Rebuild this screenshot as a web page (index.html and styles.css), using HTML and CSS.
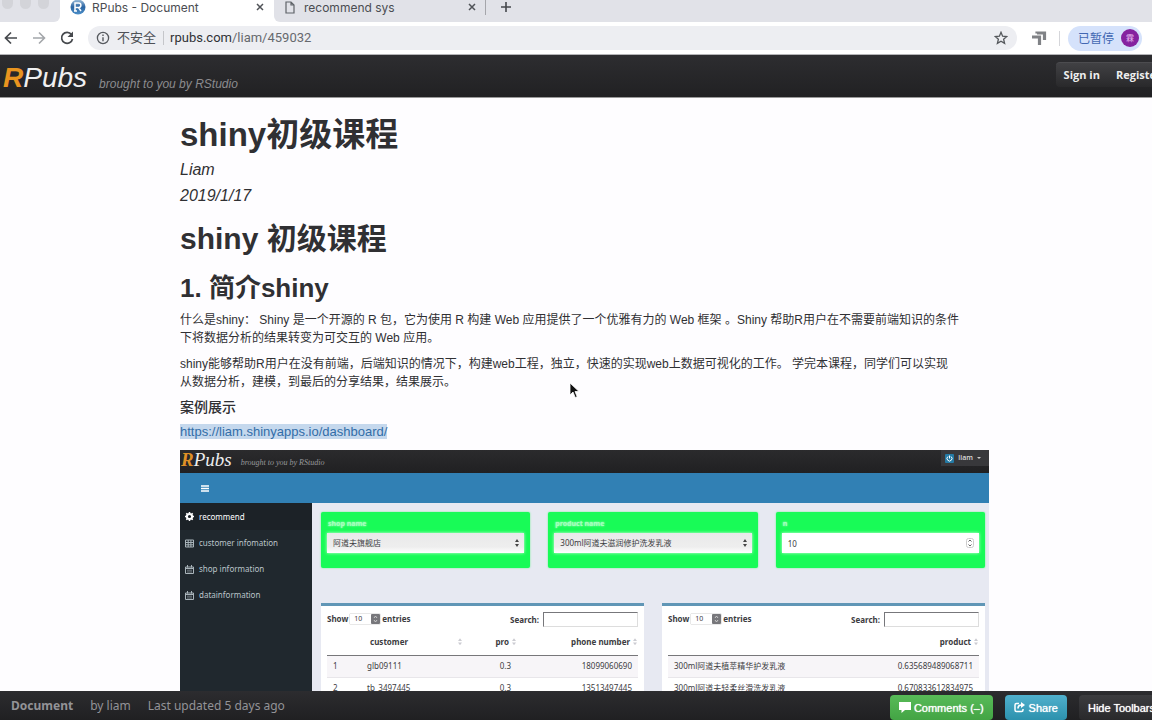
FILE: index.html
```html
<!DOCTYPE html>
<html lang="zh-CN">
<head>
<meta charset="utf-8">
<title>RPubs - Document</title>
<link rel="stylesheet" href="styles.css">
</head>
<body>
<div class="window">
  <div class="tabs">
    <div class="lights"><i></i><i></i><i></i></div>
    <div class="tab active">
      <svg class="favicon" width="16" height="16" viewBox="0 0 16 16"><defs><linearGradient id="ball" x2="0" y2="1"><stop stop-color="#9fc0dc"/><stop offset=".5" stop-color="#2b64a2"/><stop offset="1" stop-color="#4e91ca"/></linearGradient></defs><circle cx="8" cy="8" r="7.5" fill="url(#ball)"/><path d="M5 12V4h3.700a2.200 2.200 0 0 1 0 4.400H5.500M8.500 8.500L11 12M4 12h3" fill="none" stroke="#fff" stroke-width="1.500"/></svg>
      <span class="tab-title">RPubs - Document</span>
      <button class="close" aria-label="Close tab"><svg width="8" height="8" viewBox="0 0 8 8"><path d="M1 1l6 6M7 1L1 7" stroke="#505358" stroke-width="1.500"/></svg></button>
    </div>
    <div class="tab">
      <svg class="page-icon" width="10" height="13" viewBox="0 0 10 13"><path d="M1 1h5l3 3v8H1zM6 1v3h3" fill="none" stroke="#5f6368" stroke-width="1.200"/></svg>
      <span class="tab-title">recommend sys</span>
      <button class="close" aria-label="Close tab"><svg width="8" height="8" viewBox="0 0 8 8"><path d="M1 1l6 6M7 1L1 7" stroke="#505358" stroke-width="1.500"/></svg></button>
    </div>
    <button class="new-tab" aria-label="New tab"><svg width="12" height="12" viewBox="0 0 12 12"><path d="M6 1v10M1 6h10" stroke="#45484c" stroke-width="1.600"/></svg></button>
  </div>
  <div class="toolbar">
    <button aria-label="Back"><svg width="14" height="14" viewBox="0 0 14 14"><path d="M13 7H2M7 1.500L1.500 7 7 12.500" fill="none" stroke="#46494d" stroke-width="1.700"/></svg></button>
    <button aria-label="Forward"><svg width="14" height="14" viewBox="0 0 14 14"><path d="M1 7h11M7 1.500L12.500 7 7 12.500" fill="none" stroke="#a3a6aa" stroke-width="1.600"/></svg></button>
    <button aria-label="Reload"><svg width="14" height="14" viewBox="0 0 14 14"><path d="M11.500 3.500A5.500 5.500 0 1 0 12.500 8" fill="none" stroke="#46494d" stroke-width="1.700"/><path d="M13 0.500v5.500H7.500z" fill="#46494d"/></svg></button>
    <div class="address">
      <svg width="14" height="14" viewBox="0 0 14 14"><circle cx="7" cy="7" r="5.600" fill="none" stroke="#56595e" stroke-width="1.300"/><path d="M7 6.200v4M7 3.500v1.400" stroke="#56595e" stroke-width="1.400"/></svg>
      <span class="insecure">不安全</span>
      <span class="url">rpubs.com<span class="path">/liam/459032</span></span>
      <svg class="star" width="14" height="14" viewBox="0 0 14 14"><path d="M7 1.300l1.600 3.900 4.200.3-3.200 2.700 1 4.200L7 10.200l-3.600 2.200 1-4.200L1.200 5.500l4.200-.3z" fill="none" stroke="#55585c" stroke-width="1.300"/></svg>
    </div>
    <svg class="extension" width="16" height="16" viewBox="0 0 16 16"><path d="M1 7h7.500v8M6 3.500V3h7.500v7" fill="none" stroke="#808286" stroke-width="3.200"/></svg>
    <span class="divider"></span>
    <button class="profile">已暂停<span class="avatar">霖</span></button>
  </div>

  <header class="navbar">
    <a class="brand" href="#"><b>R</b>Pubs</a>
    <span class="tagline">brought to you by RStudio</span>
    <nav class="account"><a href="#">Sign in</a><a href="#">Register</a></nav>
  </header>

  <main class="document">
    <h1 class="title">shiny初级课程</h1>
    <p class="meta">Liam</p>
    <p class="meta">2019/1/17</p>
    <h1 class="course">shiny 初级课程</h1>
    <h2>1. 简介shiny</h2>
    <p class="body">什么是shiny： Shiny 是一个开源的 R 包，它为使用 R 构建 Web 应用提供了一个优雅有力的 Web 框架 。Shiny 帮助R用户在不需要前端知识的条件<br>下将数据分析的结果转变为可交互的 Web 应用。</p>
    <p class="body">shiny能够帮助R用户在没有前端，后端知识的情况下，构建web工程，独立，快速的实现web上数据可视化的工作。 学完本课程，同学们可以实现<br>从数据分析，建模，到最后的分享结果，结果展示。</p>
    <h4>案例展示</h4>
    <p class="demo-link"><a href="#">https://liam.shinyapps.io/dashboard/</a></p>

    <section class="dashboard">
      <div class="dash-nav">
        <a class="dash-brand" href="#"><b>R</b>Pubs</a>
        <span class="dash-tagline">brought to you by RStudio</span>
        <button class="dash-user"><svg width="9" height="9" viewBox="0 0 9 9"><rect width="9" height="9" rx="1" fill="#247aa5"/><path d="M3 2.500a2.500 2.500 0 1 0 3 0M4.500 1.500v3" fill="none" stroke="#fff"/></svg>liam<i class="caret"></i></button>
      </div>
      <div class="dash-bar"><button aria-label="Menu"><svg width="8" height="7" viewBox="0 0 8 7"><path d="M0 1h8M0 3.500h8M0 6h8" stroke="#fff" stroke-width="1.500"/></svg></button></div>
      <div class="dash-main">
        <nav class="sidebar">
          <a class="current" href="#"><svg width="9" height="9" viewBox="0 0 9 9"><circle cx="4.500" cy="4.500" r="2.600" fill="none" stroke="#fff" stroke-width="2"/><path d="M4.500 0v1.500M4.500 7.500V9M0 4.500h1.500M7.500 4.500H9M1.300 1.300l1 1M6.700 6.700l1 1M7.700 1.300l-1 1M2.300 6.700l-1 1" stroke="#fff" stroke-width="1.500"/></svg>recommend</a>
          <a href="#"><svg width="9" height="9" viewBox="0 0 9 9"><path d="M.5 1h8v7h-8zM.5 3.500h8M.5 5.800h8M3.200 1v7M5.900 1v7" fill="none" stroke="#a9b4ba"/></svg>customer infomation</a>
          <a href="#"><svg width="9" height="9" viewBox="0 0 9 9"><path d="M.5 2h8v6.500h-8zM.5 3.500h8M2.500 0v2.500M6.500 0v2.500" fill="none" stroke="#a9b4ba"/><path d="M2 5.200h5M2 7h5" stroke="#a9b4ba" stroke-width=".6"/></svg>shop information</a>
          <a href="#"><svg width="9" height="9" viewBox="0 0 9 9"><path d="M.5 2h8v6.500h-8zM.5 3.500h8M2.500 0v2.500M6.500 0v2.500" fill="none" stroke="#a9b4ba"/><path d="M2 5.200h5M2 7h5" stroke="#a9b4ba" stroke-width=".6"/></svg>datainformation</a>
        </nav>
        <div class="content">
          <div class="filters">
            <div class="filter">
              <label for="shop">shop name</label>
              <div class="field"><select id="shop"><option>阿道夫旗舰店</option></select><svg class="arrows" width="4" height="8" viewBox="0 0 4 8"><path d="M0 3l2-3 2 3zM0 5l2 3 2-3z" fill="#444"/></svg></div>
            </div>
            <div class="filter">
              <label for="product">product name</label>
              <div class="field"><select id="product"><option>300ml阿道夫滋润修护洗发乳液</option></select><svg class="arrows" width="4" height="8" viewBox="0 0 4 8"><path d="M0 3l2-3 2 3zM0 5l2 3 2-3z" fill="#444"/></svg></div>
            </div>
            <div class="filter">
              <label for="count">n</label>
              <div class="field"><input id="count" type="text" value="10"><svg class="arrows" width="8" height="10" viewBox="0 0 8 10"><rect x=".5" y=".5" width="7" height="9" rx="2" fill="#fff" stroke="#ccc"/><path d="M2.500 3.500L4 2l1.500 1.500M2.500 6.500L4 8l1.500-1.500" fill="none" stroke="#666"/></svg></div>
            </div>
          </div>
          <div class="results">
            <div class="panel">
              <div class="controls">
                <label>Show <span class="length"><select><option>10</option></select><svg width="9" height="10" viewBox="0 0 9 10"><rect width="9" height="10" rx="1" fill="#77777b"/><path d="M3 4l1.500-2L6 4M3 6l1.500 2L6 6" fill="none" stroke="#ddd" stroke-width=".8"/></svg></span> entries</label>
                <label>Search: <input class="search" type="search"></label>
              </div>
              <table class="customers">
                <thead><tr><th></th><th class="name">customer<i class="sort"></i></th><th>pro<i class="sort"></i></th><th>phone number<i class="sort"></i></th></tr></thead>
                <tbody>
                  <tr><td>1</td><td>glb09111</td><td>0.3</td><td>18099060690</td></tr>
                  <tr><td>2</td><td>tb_3497445</td><td>0.3</td><td>13513497445</td></tr>
                </tbody>
              </table>
            </div>
            <div class="panel">
              <div class="controls">
                <label>Show <span class="length"><select><option>10</option></select><svg width="9" height="10" viewBox="0 0 9 10"><rect width="9" height="10" rx="1" fill="#77777b"/><path d="M3 4l1.500-2L6 4M3 6l1.500 2L6 6" fill="none" stroke="#ddd" stroke-width=".8"/></svg></span> entries</label>
                <label>Search: <input class="search" type="search"></label>
              </div>
              <table class="products">
                <thead><tr><th></th><th>product<i class="sort"></i></th></tr></thead>
                <tbody>
                  <tr><td>300ml阿道夫植萃精华护发乳液</td><td>0.635689489068711</td></tr>
                  <tr><td>300ml阿道夫轻柔丝滑洗发乳液</td><td>0.670833612834975</td></tr>
                </tbody>
              </table>
            </div>
          </div>
        </div>
      </div>
    </section>
  </main>

  <footer class="footer">
    <b>Document</b><span>by liam</span><span>Last updated 5 days ago</span>
    <div class="actions">
      <button class="comments"><svg width="12" height="11" viewBox="0 0 12 11"><path d="M0 0h12v8H6l-3.500 3V8H0z" fill="#fff"/></svg>Comments (–)</button>
      <button class="share"><svg width="11" height="11" viewBox="0 0 11 11"><path d="M5 1.500H2.500Q1 1.500 1 3v5q0 1.500 1.500 1.500h5Q9 9.500 9 8V7" fill="none" stroke="#fff" stroke-width="1.500"/><path d="M4 6.500Q4 3 7.500 3" fill="none" stroke="#fff" stroke-width="1.700"/><path d="M7 0l4 3-4 3z" fill="#fff"/></svg>Share</button>
      <button class="hide">Hide Toolbars</button>
    </div>
  </footer>
</div>
<svg class="cursor" width="11" height="17" viewBox="0 0 11 17"><path d="M1 1v12l3-3 2.200 5.500 2-.8L6 9.500h4z" fill="#111" stroke="#fff" stroke-width=".8"/></svg>
</body>
</html>
```

FILE: styles.css
```css
* { box-sizing: border-box; }
body { margin: 0; background: #fefdff; color: #303033; font-family: "Liberation Sans", "Noto Sans CJK SC", sans-serif; }
h1, h2, h4, p { margin: 0; }
a { color: inherit; text-decoration: none; }
button, input, select { margin: 0; border: 0; padding: 0; background: none; color: inherit; font: inherit; }
svg { display: block; flex: none; }
.window { display: flex; flex-direction: column; height: 100vh; overflow: hidden; }

.tabs { display: flex; flex: none; height: 22px; overflow: hidden; background: #fff; font: 12px/15px Inter, sans-serif; color: #4b4d52; }
.lights { display: flex; gap: 7px; width: 60px; padding-left: 2px; background: #e1e2e8; border-radius: 0 0 6px 0; }
.lights i { width: 11px; height: 9px; border-radius: 0 0 6px 6px; background: #d3d4d9; }
.tab { display: flex; align-items: flex-start; width: 212px; padding: 0 10px 0 11px; background: #e1e2e8; }
.tab.active { width: 214px; padding: 0 10px; background: #fff; }
.tab + .tab { border-bottom-left-radius: 6px; }
.favicon { margin-right: 6px; margin-top: -1px; }
.page-icon { margin-right: 9px; margin-top: 1px; }
.close { margin-left: auto; padding: 3px 0; }
.new-tab { flex: 1; padding: 1px 14px 9px; background: #e1e2e8; }
.new-tab::before { content: ""; float: left; height: 15px; margin: -1px 0 0 -15px; border-left: 1px solid #a5a6ab; }

.toolbar { display: flex; flex: none; align-items: center; height: 33px; gap: 14px; padding: 0 10px 0 4px; border-bottom: 1px solid #b4b4b7; background: #fff; }
.address { display: flex; flex: 1; align-items: center; height: 24px; padding: 0 9px 0 8px; border-radius: 12px; background: #edeef2; font: 13px/24px Roboto, "Noto Sans CJK SC", sans-serif; color: #4e5156; }
.insecure { margin-left: 7px; padding-right: 7px; border-right: 1px solid #c5c6ca; line-height: 14px; }
.url { margin-left: 6px; color: #303236; }
.path { color: #66696e; }
.star { margin-left: auto; }
.extension { margin-right: -2px; }
.divider { width: 1px; height: 15px; margin: 0 -6px 0 0; background: #d5d6da; }
.profile { display: flex; align-items: center; gap: 7px; height: 25px; padding: 0 3px 0 10px; border-radius: 13px; background: #d5e2fb; color: #4267b2; font: 12px/24px "Noto Sans CJK SC", sans-serif; }
.avatar { width: 18px; height: 18px; border-radius: 50%; background: #85229f; color: #e5b8ee; font-size: 8px; line-height: 18px; text-align: center; }

.navbar { display: flex; flex: none; align-items: flex-start; height: 43px; overflow: hidden; padding-left: 3px; background: linear-gradient(#2d2d30, #212123); border-bottom: 1px solid #999; font-style: italic; }
.brand { font-size: 28px; line-height: 46px; color: #f0f0f1; }
.brand b { color: #e8941f; }
.tagline { margin-left: 12px; font-size: 12px; line-height: 58px; color: #8c8c8f; }
.account { display: flex; gap: 16px; margin: 7px -21px 0 auto; padding: 0 12px 0 8px; background: linear-gradient(#414144, #29292b); border-radius: 4px; border-top: 1px solid #4c4c4f; color: #eee; font: bold 11px/24px "Open Sans", sans-serif; }

.document { flex: 1; min-height: 0; overflow: hidden; padding: 15px 163px 0 180px; }
.title { font-size: 33px; line-height: 44px; }
.meta { font-size: 16px; line-height: 26px; font-style: italic; }
.course { margin-top: 12px; font-size: 30px; line-height: 36px; }
h2 { margin-top: 15px; font-size: 26px; line-height: 32px; }
h1, h2 { font-weight: 600; }
.body { margin-top: 8px; font-size: 12px; line-height: 18px; white-space: nowrap; }
h2 + .body { margin-top: 7px; }
h4 { margin-top: 7px; font-size: 14px; line-height: 18px; font-weight: 500; }
.demo-link { margin-top: 7px; font-size: 13px; line-height: 18px; }
.demo-link a { background: #c5d8ed; color: #326da8; }

.dashboard { margin-top: 9px; font: 8px/12px "Noto Sans", "Noto Sans CJK SC", sans-serif; color: #3c3c3f; }
.dash-nav { display: flex; height: 23px; background: linear-gradient(#2b2b2d, #202022); font-family: "Liberation Serif", serif; font-style: italic; }
.dash-brand { padding-left: 1px; color: #eee; font-size: 19px; line-height: 20px; }
.dash-brand b { color: #df9026; }
.dash-tagline { margin-left: 9px; font-size: 8px; line-height: 26px; color: #98989b; }
.dash-user { display: flex; align-items: center; gap: 4px; height: 16px; margin-left: auto; padding: 0 8px 0 4px; background: #38383b; color: #ddd; font: 600 7px/16px "Open Sans", sans-serif; }
.caret { border: 2px solid transparent; border-top-color: #ccc; border-bottom: 0; }
.dash-bar { height: 30px; padding: 12px 0 0 21px; background: #3180b4; }
.dash-bar button { display: block; }
.dash-main { display: flex; height: 300px; background: #e7e9f2; }
.sidebar { width: 132px; background: #20282e; color: #bbc5ca; font-size: 8px; }
.sidebar a { display: flex; align-items: center; gap: 5px; height: 26px; padding-left: 5px; }
.sidebar .current { height: 27px; background: #1c2227; color: #fff; }
.content { flex: 1; padding: 9px 4px 0 9px; }
.filters { display: grid; grid-template-columns: repeat(3, 1fr); gap: 18px; }
.filter { height: 56px; padding: 6px; border-radius: 2px; background: #18fb57; box-shadow: 0 0 2px #62f38b; }
.filter label { display: block; height: 15px; padding-left: 1px; color: #a5ffbe; text-shadow: 0 0 2px #d9ffe3; font-weight: bold; font-size: 7px; }
.field { position: relative; }
.field select, .field input { display: block; appearance: none; width: 100%; height: 20px; padding: 0 6px; background: linear-gradient(#e9e9ea, #eee 70%, #fff); box-shadow: 0 0 3px #d8ffe2; font-size: 8px; }
.field input { background: #fff; }
.arrows { position: absolute; right: 5px; top: 50%; transform: translateY(-50%); }
.results { display: grid; grid-template-columns: 1fr 1fr; gap: 18px; margin-top: 35px; }
.panel { height: 240px; padding: 5px 6px; border-top: 3px solid #6096b6; background: #fff; }
.controls { display: flex; justify-content: space-between; height: 21px; font-weight: bold; }
.controls label { display: flex; align-items: center; gap: 2px; height: 15px; }
.controls label + label { gap: 4px; height: 17px; }
.length { display: flex; width: 30px; height: 10px; box-shadow: 0 0 1px #777; font-weight: normal; font-size: 7px; }
.length select { flex: 1; min-width: 0; appearance: none; padding-left: 4px; line-height: 10px; }
.search { width: 95px; height: 15px; border: 1px solid #ddd; border-top-color: #77777b; border-left-color: #77777b; appearance: none; }
table { width: 100%; border-collapse: collapse; table-layout: fixed; text-align: right; }
th { height: 23px; padding: 0 1px 2px; border-bottom: 1px solid #77777a; text-align: right; }
td { height: 22px; padding: 0 6px; border-bottom: 1px solid #e8e6ea; }
tbody tr:first-child { background: #f7f5f8; }
.customers th:nth-child(1) { width: 20px; }
.customers th:nth-child(2) { width: 116px; }
.customers th:nth-child(3) { width: 54px; }
.customers td:nth-child(-n+2), .products td:first-child { text-align: left; }
.customers td:nth-child(2) { padding-left: 20px; }
.name .sort { margin-left: 50px; }
.sort { display: inline-block; width: 4px; height: 7px; margin-left: 3px; background: #ccccd2; clip-path: polygon(50% 0, 100% 40%, 0 40%, 0 60%, 100% 60%, 50% 100%, 0 60%, 0 40%); }

.footer { display: flex; flex: none; align-items: center; gap: 17px; height: 29px; overflow: hidden; padding-left: 11px; background: linear-gradient(#2c2c2f, #202022); color: #939397; font: 12px/32px "Noto Sans", sans-serif; white-space: nowrap; }
.footer b { font-size: 12px; }
.actions { display: flex; align-self: flex-start; gap: 12px; margin: 4px -12px 0 auto; font: 11px/24px "Liberation Sans", sans-serif; color: #fff; text-shadow: 0 0 1px #fff; }
.actions button { display: flex; align-items: center; height: 25px; gap: 3px; padding: 0 9px; border-radius: 4px; background: linear-gradient(#58bb58, #43a444); text-shadow: inherit; }
.actions .share { gap: 4px; background: linear-gradient(#50b0cd, #2c91ad); }
.actions .hide { background: linear-gradient(#3c3c3f, #29292b); }
.cursor { position: absolute; left: 569px; top: 382px; }
```
